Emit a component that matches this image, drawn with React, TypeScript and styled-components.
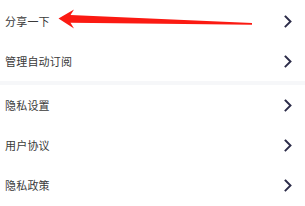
import React from "react";
import styled, { createGlobalStyle } from "styled-components";

const Global = createGlobalStyle`
  html, body { margin: 0; padding: 0; background: #ffffff; }
  body { font-family: "Noto Sans CJK SC", "Noto Sans", sans-serif; }
`;

const Page = styled.div`
  position: relative;
  width: 305px;
  height: 206px;
  padding-top: 1px;
  box-sizing: border-box;
  overflow: hidden;
  background: #ffffff;
`;

const Group = styled.div`
  display: flex;
  flex-direction: column;
  background: #ffffff;
`;

const Gap = styled.div`
  height: 4px;
  background: #f6f7f9;
`;

const Row = styled.div`
  height: 40px;
  display: flex;
  align-items: center;
  justify-content: space-between;
  padding: 0 13px 0 5px;
`;

const Label = styled.span`
  font-size: 11px;
  color: #3a3a3a;
  letter-spacing: 0.2px;
`;

const Chevron = styled.svg`
  width: 8px;
  height: 13px;
  display: block;
`;

const Arrow = styled.svg`
  position: absolute;
  left: 0;
  top: 0;
  width: 305px;
  height: 40px;
  pointer-events: none;
`;

const Chev = () => (
  <Chevron viewBox="0 0 8 13">
    <path d="M1.5 1.5 L6.5 6.5 L1.5 11.5" fill="none" stroke="#2b2b48" strokeWidth="1.9" strokeLinecap="square" />
  </Chevron>
);

const Item = ({ text }: { text: string }) => (
  <Row>
    <Label>{text}</Label>
    <Chev />
  </Row>
);

export default function App() {
  return (
    <>
      <Global />
      <Page>
        <Group>
          <Item text="分享一下" />
          <Item text="管理自动订阅" />
        </Group>
        <Gap />
        <Group>
          <Item text="隐私设置" />
          <Item text="用户协议" />
          <Item text="隐私政策" />
        </Group>
        <Arrow viewBox="0 0 305 40">
          <polygon
            points="58.5,18.5 74,9.5 70.5,15 252,23 252,24.8 70.5,22.8 74,28.5"
            fill="#fb1a12"
          />
        </Arrow>
      </Page>
    </>
  );
}
